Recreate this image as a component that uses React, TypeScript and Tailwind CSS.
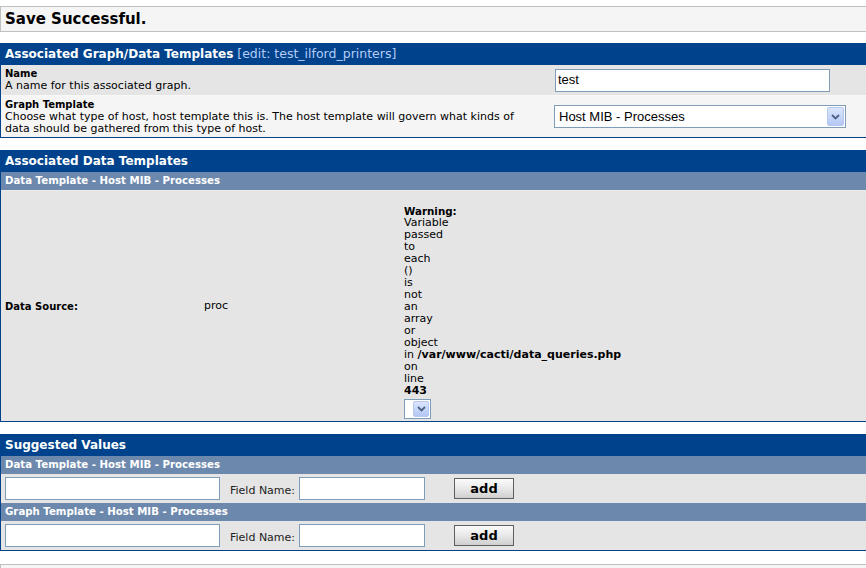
import React from "react";

const font = "[font-family:'DejaVu_Sans',Verdana,sans-serif]";

function DropArrow({ className = "" }: { className?: string }) {
  return (
    <div
      className={
        "flex items-center justify-center rounded-[2px] border border-[#b7c8f0] bg-gradient-to-b from-[#dbe6fd] to-[#b4c8f6] " +
        className
      }
    >
      <svg width="9" height="6" viewBox="0 0 9 6">
        <path d="M1 1 L4.5 4.5 L8 1" fill="none" stroke="#4d6185" strokeWidth="1.8" />
      </svg>
    </div>
  );
}

function Header({ children }: { children: React.ReactNode }) {
  return (
    <div className="flex h-[22px] items-center bg-[#00438c] px-[4px] text-[12px] font-bold text-white">
      {children}
    </div>
  );
}

function SubHeader({ children }: { children: React.ReactNode }) {
  return (
    <div className="flex h-[18px] items-center bg-[#6d88ad] px-[4px] text-[10.2px] font-bold text-white">
      {children}
    </div>
  );
}

function AddRow() {
  return (
    <div className="flex h-[29px] items-center bg-[#e5e5e5] pl-[4px]">
      <div className="h-[23px] w-[215px] border border-[#7f9db9] bg-white" />
      <span className="ml-[10px] mt-[6px] text-[11px] text-[#222]">Field Name:</span>
      <div className="ml-[4px] h-[23px] w-[126px] border border-[#7f9db9] bg-white" />
      <button className="ml-[29px] flex h-[21px] w-[60px] items-center justify-center border border-[#5f5f5f] bg-gradient-to-b from-[#fbfbfb] via-[#e8e8e8] to-[#cfcfcf] text-[13px] font-bold text-black">
        add
      </button>
    </div>
  );
}

const warning = ["Variable", "passed", "to", "each", "()", "is", "not", "an", "array", "or", "object"];

export default function App() {
  return (
    <div className={"h-[568px] w-[866px] overflow-hidden bg-white text-[11px] text-black " + font}>
      <div className="mt-[6px] flex h-[26px] items-center border-y border-l border-[#c0c0c0] bg-[#f5f5f5] px-[4px] text-[15px] font-bold">
        Save Successful.
      </div>

      <div className="mt-[11px] border-b border-l border-[#00438c]">
        <Header>
          Associated Graph/Data Templates
          <span className="ml-[4px] text-[12.5px] font-normal text-[#b6ccf6]">[edit: test_ilford_printers]</span>
        </Header>
        <div className="flex h-[30px] items-center bg-[#e5e5e5]">
          <div className="w-[554px] pl-[4px] leading-[12px]">
            <div className="text-[10px] font-bold">Name</div>
            <div>A name for this associated graph.</div>
          </div>
          <div className="flex h-[23px] w-[275px] items-center border border-[#7f9db9] bg-white pl-[2px] text-[13px] [font-family:'Liberation_Sans',Arial,sans-serif]">
            test
          </div>
        </div>
        <div className="flex h-[42px] items-center border-t border-[#f8f8f8] bg-[#f5f5f5]">
          <div className="w-[553px] pl-[4px] leading-[12px]">
            <div className="text-[10px] font-bold">Graph Template</div>
            <div className="w-[530px]">
              Choose what type of host, host template this is. The host template will govern what kinds of data should
              be gathered from this type of host.
            </div>
          </div>
          <div className="flex h-[23px] w-[292px] items-center justify-between border border-[#7f9db9] bg-white pl-[4px] pr-[1px] text-[13px] [font-family:'Liberation_Sans',Arial,sans-serif]">
            <span>Host MIB - Processes</span>
            <DropArrow className="h-[19px] w-[17px]" />
          </div>
        </div>
      </div>

      <div className="mt-[12px] border-b border-l border-[#00438c]">
        <Header>Associated Data Templates</Header>
        <SubHeader>Data Template - Host MIB - Processes</SubHeader>
        <div className="flex h-[231px] items-center border-t border-[#ececec] bg-[#e5e5e5]">
          <div className="w-[203px] pl-[4px] text-[10px] font-bold">Data Source:</div>
          <div className="w-[200px]">proc</div>
          <div className="leading-[12px]">
            <div className="h-[12px]" />
            <div className="text-[10.3px] font-bold">Warning:</div>
            {warning.map((w) => (
              <div key={w}>{w}</div>
            ))}
            <div>
              in <b>/var/www/cacti/data_queries.php</b>
            </div>
            <div>on</div>
            <div>line</div>
            <div className="font-bold">443</div>
            <div className="mt-[2px] flex h-[20px] w-[27px] items-center justify-end border border-[#7f9db9] bg-white pr-[1px]">
              <DropArrow className="h-[16px] w-[16px]" />
            </div>
          </div>
        </div>
      </div>

      <div className="mt-[12px] border-b border-l border-[#00438c]">
        <Header>Suggested Values</Header>
        <SubHeader>Data Template - Host MIB - Processes</SubHeader>
        <AddRow />
        <SubHeader>Graph Template - Host MIB - Processes</SubHeader>
        <AddRow />
      </div>

      <div className="mt-[13px] h-[20px] border-l border-t border-[#c0c0c0] bg-[#f5f5f5]" />
    </div>
  );
}
